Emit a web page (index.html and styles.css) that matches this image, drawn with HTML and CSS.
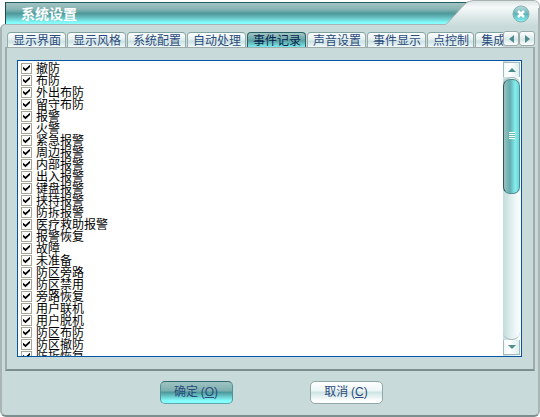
FILE: index.html
```html
<!DOCTYPE html>
<html lang="zh-CN">
<head>
<meta charset="utf-8">
<title>系统设置</title>
<link rel="stylesheet" href="styles.css">
</head>
<body>
<main class="window">
  <header class="header">
    <h1 class="title">系统设置</h1>
    <div class="cap">
      <svg class="cap-shape" width="94" height="26" viewBox="0 0 94 26" aria-hidden="true">
        <defs>
          <linearGradient id="cap-fill" x1="0" y1="0" x2="0" y2="1">
            <stop offset="0" stop-color="#dce5e5"/>
            <stop offset=".25" stop-color="#f6f9f9"/>
            <stop offset=".7" stop-color="#d9e6e6"/>
            <stop offset="1" stop-color="#c8dada"/>
          </linearGradient>
        </defs>
        <path d="M24 0H94V6Q92 1 88 1Z" fill="#fff"/>
        <path d="M0 24L2 23L17 6Q21 1 27 1H87Q93 1 93 7V26H0Z" fill="url(#cap-fill)"/>
        <path d="M0 23.500H1L17 6Q21 .5 27 .5H87Q93.500 .5 93.500 7V26" fill="none" stroke="#a9b1b1"/>
        <path d="M92.500 8V26" stroke="#a9b5b5" fill="none"/>
      </svg>
      <button class="close" type="button" aria-label="关闭">
        <svg width="18" height="18" viewBox="0 0 18 18" aria-hidden="true">
          <defs>
            <linearGradient id="close-fill" x1="0" y1="0" x2="0" y2="1">
              <stop offset="0" stop-color="#c3dddd"/>
              <stop offset=".5" stop-color="#5fb3b8"/>
              <stop offset="1" stop-color="#84f6f8"/>
            </linearGradient>
          </defs>
          <circle cx="9" cy="9" r="8" fill="url(#close-fill)" stroke="#86b0b2"/>
          <path d="M6 6L12 12M12 6L6 12" stroke="#fff" stroke-width="2.500"/>
        </svg>
      </button>
    </div>
  </header>

  <div class="frame">
    <nav class="tab-row">
      <div class="tabs" role="tablist">
        <button class="tab" type="button" role="tab">显示界面</button>
        <button class="tab" type="button" role="tab">显示风格</button>
        <button class="tab" type="button" role="tab">系统配置</button>
        <button class="tab" type="button" role="tab">自动处理</button>
        <button class="tab active" type="button" role="tab" aria-selected="true">事件记录</button>
        <button class="tab" type="button" role="tab">声音设置</button>
        <button class="tab" type="button" role="tab">事件显示</button>
        <button class="tab" type="button" role="tab">点控制</button>
        <button class="tab" type="button" role="tab">集成</button>
      </div>
      <div class="pager">
        <button class="page" type="button" aria-label="向左"><svg width="5" height="8" viewBox="0 0 5 8"><path d="M5 0V8L0 4Z"/></svg></button>
        <button class="page" type="button" aria-label="向右"><svg width="5" height="8" viewBox="0 0 5 8"><path d="M0 0V8L5 4Z"/></svg></button>
      </div>
    </nav>

    <section class="panel">
      <div class="listbox">
        <div class="items">
          <label class="item"><input type="checkbox" checked>撤防</label>
          <label class="item"><input type="checkbox" checked>布防</label>
          <label class="item"><input type="checkbox" checked>外出布防</label>
          <label class="item"><input type="checkbox" checked>留守布防</label>
          <label class="item"><input type="checkbox" checked>报警</label>
          <label class="item"><input type="checkbox" checked>火警</label>
          <label class="item"><input type="checkbox" checked>紧急报警</label>
          <label class="item"><input type="checkbox" checked>周边报警</label>
          <label class="item"><input type="checkbox" checked>内部报警</label>
          <label class="item"><input type="checkbox" checked>出入报警</label>
          <label class="item"><input type="checkbox" checked>键盘报警</label>
          <label class="item"><input type="checkbox" checked>挟持报警</label>
          <label class="item"><input type="checkbox" checked>防拆报警</label>
          <label class="item"><input type="checkbox" checked>医疗救助报警</label>
          <label class="item"><input type="checkbox" checked>报警恢复</label>
          <label class="item"><input type="checkbox" checked>故障</label>
          <label class="item"><input type="checkbox" checked>未准备</label>
          <label class="item"><input type="checkbox" checked>防区旁路</label>
          <label class="item"><input type="checkbox" checked>防区禁用</label>
          <label class="item"><input type="checkbox" checked>旁路恢复</label>
          <label class="item"><input type="checkbox" checked>用户联机</label>
          <label class="item"><input type="checkbox" checked>用户脱机</label>
          <label class="item"><input type="checkbox" checked>防区布防</label>
          <label class="item"><input type="checkbox" checked>防区撤防</label>
          <label class="item"><input type="checkbox" checked>防拆恢复</label>
        </div>
        <div class="scrollbar">
          <button class="arrow" type="button" aria-label="向上"><svg width="8" height="4" viewBox="0 0 8 4"><path d="M4 0L8 4H0Z"/></svg></button>
          <div class="track">
            <div class="thumb"><span class="grip"></span></div>
          </div>
          <button class="arrow down" type="button" aria-label="向下"><svg width="8" height="4" viewBox="0 0 8 4"><path d="M0 0H8L4 4Z"/></svg></button>
        </div>
      </div>
    </section>

    <footer class="actions">
      <button class="button primary" type="button">确定 <span class="key">(<u>O</u>)</span></button>
      <button class="button" type="button">取消 <span class="key">(<u>C</u>)</span></button>
    </footer>
  </div>
</main>
</body>
</html>
```
FILE: styles.css
```css
* {
  box-sizing: border-box;
}

body {
  margin: 0;
  background: #fff;
  font-family: "Noto Sans CJK SC", sans-serif;
  font-size: 12px;
  color: #000;
}

button {
  margin: 0;
  padding: 0;
  border: 0;
  font: inherit;
  color: #2c4a7c;
}

.header {
  display: flex;
  height: 24px;
  padding: 2px 0 0 5px;
}

.title {
  flex: 1;
  margin: 0 -46px 0 0;
  padding-left: 15px;
  border-top: 1px solid #1d5f63;
  border-left: 1px solid #1d4a4d;
  background: linear-gradient(#a3c3c2, #86b4b4 30%, #4f999b 50%, #62b5b7 65%, #86ffff 95%);
  color: #fff;
  font-size: 14px;
  font-weight: 700;
  line-height: 21px;
}

.cap {
  position: relative;
  z-index: 1;
  width: 94px;
  margin: -2px 0 -2px -2px;
}

.cap-shape {
  display: block;
}

.close {
  position: absolute;
  top: 5px;
  right: 10px;
  width: 18px;
  height: 18px;
  background: none;
}

.close svg {
  display: block;
}

.frame {
  padding: 6px 3px 11px;
  border: 2px solid #a9b5b5;
  border-top: 1px solid #a9b5b5;
  border-bottom-color: #7d8e8e;
  border-radius: 5px 0 6px 6px;
  background: #c8dada;
}

.tab-row {
  display: flex;
  align-items: flex-start;
  height: 16px;
  padding-left: 2px;
}

.tabs {
  display: flex;
  flex: 1;
  min-width: 0;
  padding-top: 1px;
  overflow: hidden;
}

.tab {
  flex: none;
  height: 15px;
  margin-right: 1px;
  padding: 0 4px 0 5px;
  border: 1px solid #9aa9a9;
  border-top-color: #7fa3a3;
  border-bottom: 0;
  border-radius: 4px 4px 0 0;
  background: linear-gradient(#fff, #e4f0f0 45%, #cde2e2 60%, #f0f9f9);
  line-height: 14px;
}

.tab.active {
  border-color: #2b6266;
  background: linear-gradient(#a3c5c5, #5ba0a3 55%, #7beced);
  color: #08244c;
}

.pager {
  display: flex;
  flex: none;
}

.page {
  display: flex;
  align-items: center;
  justify-content: center;
  width: 16px;
  height: 15px;
  border: 1px solid #9aa9a9;
  border-radius: 3px;
  background: linear-gradient(#fff, #d7e8e8 60%, #fff);
}

.page svg,
.arrow svg {
  fill: #4f8c8d;
}

.panel {
  padding: 12px 11px 12px 10px;
  border: 2px solid #a0acac;
  border-top-width: 1px;
  border-bottom-color: #7d8e8e;
}

.listbox {
  display: flex;
  height: 297px;
  border: 1px solid #0055a5;
  background: #fff;
}

.items {
  flex: 1;
  padding: 1px 3px 0;
  overflow: hidden;
}

.item {
  display: flex;
  align-items: center;
  height: 12px;
  line-height: 12px;
}

.item input {
  appearance: none;
  display: grid;
  place-items: center;
  width: 11px;
  height: 11px;
  margin: 0 4px 0 0;
  border: 1px solid #a8a696;
  background: #fff;
}

.item input:checked::before {
  content: "";
  width: 7px;
  height: 7px;
  background: #000;
  clip-path: polygon(0 32%, 36% 62%, 100% 4%, 100% 36%, 36% 98%, 0 64%);
}

.scrollbar {
  display: flex;
  flex-direction: column;
  flex: none;
  width: 18px;
  padding: 1px 1px 1px 0;
  background: linear-gradient(90deg, #c3dcdc, #e9f4f4 60%, #fff);
}

.arrow {
  display: flex;
  align-items: center;
  justify-content: center;
  height: 15px;
  border: 1px solid #a9b8b8;
  border-bottom: 0;
  background: linear-gradient(90deg, #f0f9f9, #fff 40%, #dceeee);
}

.arrow.down {
  border-top: 0;
  border-bottom: 1px solid #a9b8b8;
}

.track {
  flex: 1;
  padding-top: 1px;
  border: 1px solid #a9b8b8;
  border-width: 1px 0;
  border-radius: 8px;
}

.thumb {
  display: flex;
  align-items: center;
  justify-content: center;
  height: 115px;
  border: 1px solid #4f8f91;
  border-left-color: #2b5b5e;
  border-radius: 7px;
  background: linear-gradient(90deg, #9cc0c0, #62adaf 40%, #86eeee 75%, #6fd4d6);
}

.grip {
  width: 6px;
  height: 7px;
  margin-bottom: 2px;
  background: repeating-linear-gradient(#fff 0 1px, #66b9bb 1px 2px);
}

.actions {
  display: flex;
  justify-content: center;
  gap: 77px;
  padding: 10px 0 0 2px;
}

.button {
  width: 73px;
  height: 23px;
  padding-bottom: 3px;
  border: 1px solid #91a8a8;
  border-radius: 5px;
  background: linear-gradient(#fff, #edf6f6 40%, #cfe5e5 50%, #fff 90%);
  line-height: 18px;
}

.button.primary {
  border-color: #346b6e #4f9597 #62a9ab;
  background: linear-gradient(#a0c3c3, #7fb0b0 40%, #4f9a9c 50%, #86ffff 90%);
}

.key {
  font-family: "Liberation Sans", sans-serif;
  font-size: 12px;
}
```
